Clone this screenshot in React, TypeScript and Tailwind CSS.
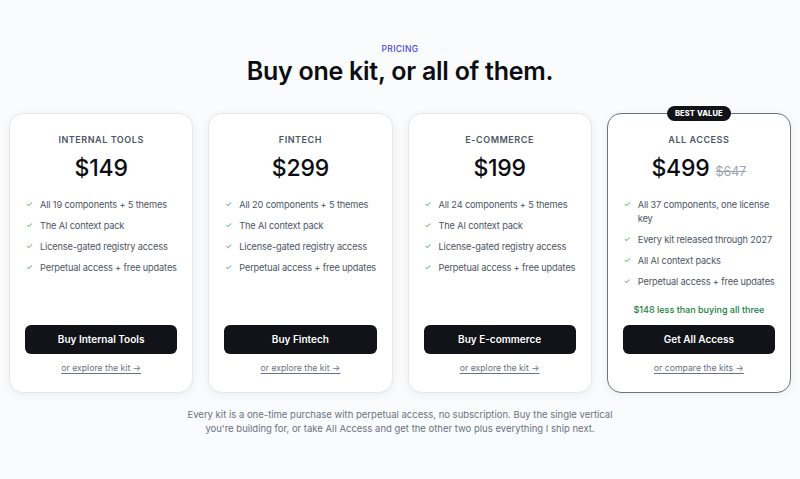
import React from "react";

type Plan = {
  name: string;
  price: string;
  was?: string;
  features: string[];
  cta: string;
  link: string;
  note?: string;
  featured?: boolean;
};

const plans: Plan[] = [
  {
    name: "Internal Tools",
    price: "$149",
    features: [
      "All 19 components + 5 themes",
      "The AI context pack",
      "License-gated registry access",
      "Perpetual access + free updates",
    ],
    cta: "Buy Internal Tools",
    link: "or explore the kit →",
  },
  {
    name: "Fintech",
    price: "$299",
    features: [
      "All 20 components + 5 themes",
      "The AI context pack",
      "License-gated registry access",
      "Perpetual access + free updates",
    ],
    cta: "Buy Fintech",
    link: "or explore the kit →",
  },
  {
    name: "E-commerce",
    price: "$199",
    features: [
      "All 24 components + 5 themes",
      "The AI context pack",
      "License-gated registry access",
      "Perpetual access + free updates",
    ],
    cta: "Buy E-commerce",
    link: "or explore the kit →",
  },
  {
    name: "All Access",
    price: "$499",
    was: "$647",
    features: [
      "All 37 components, one license key",
      "Every kit released through 2027",
      "All AI context packs",
      "Perpetual access + free updates",
    ],
    cta: "Get All Access",
    link: "or compare the kits →",
    note: "$148 less than buying all three",
    featured: true,
  },
];

function PlanCard({ plan }: { plan: Plan }) {
  return (
    <div
      className={
        "relative flex h-[280px] flex-col rounded-[14px] bg-white px-[15px] pb-[18px] pt-[19px] shadow-[0_2px_10px_rgba(15,23,42,0.06)] " +
        (plan.featured ? "border border-[#6b7280]" : "border border-[#e5e7eb]")
      }
    >
      {plan.featured && (
        <div className="absolute left-1/2 top-[-8px] -translate-x-1/2 rounded-full bg-[#111318] px-[8px] py-[2px] text-[7.5px] font-extrabold leading-[11px] tracking-[0.02em] text-white">
          BEST VALUE
        </div>
      )}
      <div className="text-center text-[9px] font-semibold uppercase leading-[14px] tracking-[0.06em] text-[#4b5563]">
        {plan.name}
      </div>
      <div className="mt-[7px] flex items-baseline justify-center gap-[6px]">
        <span className="text-[23px] font-medium leading-[28px] tracking-[-0.01em] text-[#0b0d12]">
          {plan.price}
        </span>
        {plan.was && (
          <span className="text-[12.5px] leading-[16px] text-[#9ca3af] line-through">{plan.was}</span>
        )}
      </div>
      <ul className="mt-[16px] flex flex-col gap-[7px] pl-[1px]">
        {plan.features.map((f) => (
          <li key={f} className="flex gap-[8px] text-[9.2px] leading-[14px] tracking-[-0.015em] text-[#4b5563]">
            <span className="w-[6px] shrink-0 text-[7.5px] text-[#16a34a]">✓</span>
            <span>{f}</span>
          </li>
        ))}
      </ul>
      <div className="mt-auto">
        {plan.note && (
          <div className="mb-[8px] text-center text-[9px] font-medium leading-[14px] text-[#15803d]">
            {plan.note}
          </div>
        )}
        <button className="h-[29px] w-full rounded-[6px] bg-[#111318] text-[10px] font-semibold text-white">
          {plan.cta}
        </button>
        <div className="mt-[8px] text-center text-[8.7px] leading-[12px] text-[#6b7280] underline underline-offset-2">
          {plan.link}
        </div>
      </div>
    </div>
  );
}

export default function App() {
  return (
    <div
      className="min-h-[479px] w-full bg-[#fafbfc] pt-[43px]"
      style={{ fontFamily: "Inter, 'Noto Sans', sans-serif" }}
    >
      <div className="text-center text-[8.5px] font-medium leading-[12px] tracking-[0.04em] text-[#4f46e5]">
        PRICING
      </div>
      <h1 className="mt-[1px] text-center text-[25px] font-semibold leading-[30px] tracking-[-0.01em] text-[#0b0d12]">
        Buy one kit, or all of them.
      </h1>
      <div className="mt-[27px] grid grid-cols-4 gap-[15px] px-[9px]">
        {plans.map((p) => (
          <PlanCard key={p.name} plan={p} />
        ))}
      </div>
      <p className="mx-auto mt-[15px] w-[440px] text-center text-[9.5px] leading-[14px] text-[#6b7280]">
        Every kit is a one-time purchase with perpetual access, no subscription. Buy the single vertical
        you're building for, or take All Access and get the other two plus everything I ship next.
      </p>
    </div>
  );
}
